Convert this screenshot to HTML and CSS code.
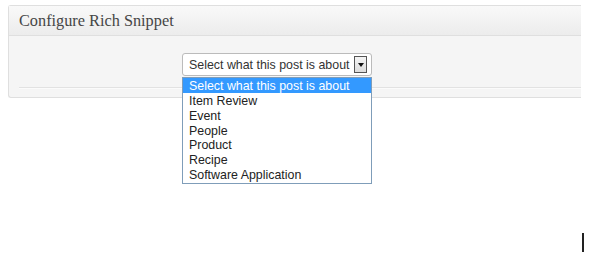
FILE: index.html
```html
<!DOCTYPE html>
<html>
<head>
  <title>Configure Rich Snippet</title>
  <link rel="stylesheet" href="styles.css">
</head>
<body>
  <div class="wrap">
    <div class="postbox">
      <h3 class="hndle">Configure Rich Snippet</h3>
      <div class="inside">
        <div class="field">
          <div class="picker">
            <span class="picker-label">Select what this post is about</span>
            <span class="picker-btn"><span class="tri"></span></span>
          </div>
          <ul class="picker-list">
            <li class="active">Select what this post is about</li>
            <li>Item Review</li>
            <li>Event</li>
            <li>People</li>
            <li>Product</li>
            <li>Recipe</li>
            <li>Software Application</li>
          </ul>
        </div>
        <div class="rule"></div>
      </div>
    </div>
    <div class="caret-row"><span class="caret"></span></div>
  </div>
</body>
</html>
```

FILE: styles.css
```css
body {
  margin: 0;
  background-color: #fff;
  font-family: "Liberation Sans", Arial, sans-serif;
  color: #333;
}

.wrap {
  padding: 5px 0 0 8px;
}

.postbox {
  width: 572px;
  border: 1px solid #dfdfdf;
  border-right: none;
  border-radius: 3px 0 0 3px;
  background-color: #f5f5f5;
}

.hndle {
  margin: 0;
  height: 29px;
  line-height: 29px;
  padding-left: 10px;
  font-family: "Liberation Serif", Georgia, serif;
  font-size: 16.3px;
  font-weight: normal;
  color: #464646;
  background: linear-gradient(to bottom, #f9f9f9, #ececec);
  border-bottom: 1px solid #dfdfdf;
}

.inside {
  padding: 17px 0 8px 10px;
}

.field {
  position: relative;
  padding-left: 163px;
}

.picker {
  display: flex;
  align-items: center;
  justify-content: space-between;
  width: 188px;
  height: 21px;
  border: 1px solid #bbb;
  border-radius: 3px;
  background-color: #fff;
  font-size: 12.4px;
}

.picker-label {
  padding-left: 6px;
}

.picker-btn {
  display: flex;
  align-items: center;
  justify-content: center;
  width: 11px;
  height: 15px;
  margin-right: 4px;
  border: 1px solid #555;
  background: linear-gradient(to bottom, #f4f4f4, #dcdcdc);
}

.tri {
  width: 0;
  height: 0;
  border-left: 3px solid transparent;
  border-right: 3px solid transparent;
  border-top: 4px solid #111;
}

.picker-list {
  position: absolute;
  top: 24px;
  left: 163px;
  width: 188px;
  margin: 0;
  padding: 0 0 1px;
  list-style: none;
  border: 1px solid #7f9db9;
  background-color: #fff;
  font-size: 12.4px;
  z-index: 2;
}

.picker-list li {
  height: 14.8px;
  line-height: 16px;
  padding-left: 6px;
  color: #222;
}

.picker-list li.active {
  height: 15px;
  background-color: #3399ff;
  color: #fff;
}

.rule {
  margin-top: 11px;
  border-top: 1px solid #e2e2e2;
  border-bottom: 1px solid #fbfbfb;
}

.caret-row {
  display: flex;
  justify-content: flex-end;
  padding: 135px 16px 0 0;
}

.caret {
  width: 2px;
  height: 19px;
  background-color: #222;
}
```
